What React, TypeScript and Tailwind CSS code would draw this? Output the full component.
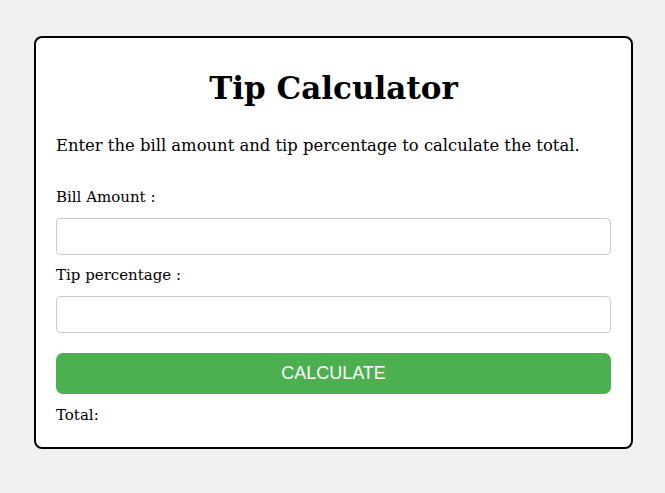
export default function App() {
  return (
    <div className="min-h-[493px] bg-[#f0f0f0] pt-[36px] font-['DejaVu_Serif',serif] text-black">
      <div className="ml-[34px] w-[599px] rounded-[8px] border-2 border-black bg-white px-[20px] pb-[20px] pt-[20px]">
        <h1 className="mt-[8px] text-center text-[31px] font-bold leading-[44px]">Tip Calculator</h1>
        <p className="mt-[23px] text-[16.4px] leading-[26px]">
          Enter the bill amount and tip percentage to calculate the total.
        </p>
        <div className="mt-[26px] text-[15px] leading-[24px]">Bill Amount :</div>
        <input type="text" className="mt-[9px] block h-[37px] w-full rounded-[4px] border border-[#ccc] bg-white px-2" />
        <div className="mt-[8px] text-[15px] leading-[24px]">Tip percentage :</div>
        <input type="text" className="mt-[9px] block h-[37px] w-full rounded-[4px] border border-[#ccc] bg-white px-2" />
        <button className="mt-[20px] block h-[41px] w-full rounded-[7px] bg-[#4caf50] font-['Liberation_Sans',sans-serif] text-[18px] text-white">
          CALCULATE
        </button>
        <div className="mt-[9px] text-[15px] leading-[24px]">Total:</div>
      </div>
    </div>
  );
}
